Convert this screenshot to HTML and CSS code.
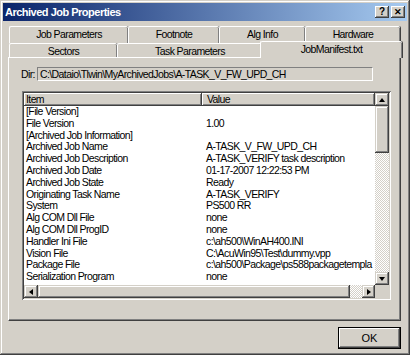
FILE: index.html
```html
<!DOCTYPE html>
<html lang="en">
<head>
    <meta charset="UTF-8">
    <title>Archived Job Properties</title>
    <link rel="stylesheet" href="styles.css">
</head>
<body>
    <div class="window">
        <div class="titlebar">
            <span class="title">Archived Job Properties</span>
            <div class="caption-btns">
                <span class="cbtn">?</span>
                <span class="cbtn cbtn-x">&#x2715;</span>
            </div>
        </div>

        <div class="tabrow back">
            <div class="tab" style="width:119px">Job Parameters</div>
            <div class="tab" style="width:91px">Footnote</div>
            <div class="tab" style="width:86px">Alg Info</div>
            <div class="tab" style="width:95px">Hardware</div>
        </div>
        <div class="tabrow front">
            <div class="tab" style="width:108px">Sectors</div>
            <div class="tab" style="width:145px">Task Parameters</div>
            <div class="tab selected" style="width:142px">JobManifest.txt</div>
        </div>

        <div class="panel">
            <div class="dir-row">
                <span class="dir-label">Dir:</span>
                <div class="field">C:\Dataio\Tlwin\MyArchivedJobs\A-TASK_V_FW_UPD_CH</div>
            </div>

            <div class="listview">
                <div class="list-main">
                    <div class="list-header">
                        <div class="hcol hcol-item">Item</div>
                        <div class="hcol hcol-value">Value</div>
                    </div>
                    <div class="rows">
                        <div class="row"><span>[File Version]</span><span></span></div>
                        <div class="row"><span>File Version</span><span>1.00</span></div>
                        <div class="row"><span>[Archived Job Information]</span><span></span></div>
                        <div class="row"><span>Archived Job Name</span><span>A-TASK_V_FW_UPD_CH</span></div>
                        <div class="row"><span>Archived Job Description</span><span>A-TASK_VERIFY task description</span></div>
                        <div class="row"><span>Archived Job Date</span><span>01-17-2007 12:22:53 PM</span></div>
                        <div class="row"><span>Archived Job State</span><span>Ready</span></div>
                        <div class="row"><span>Originating Task Name</span><span>A-TASK_VERIFY</span></div>
                        <div class="row"><span>System</span><span>PS500 RR</span></div>
                        <div class="row"><span>Alg COM Dll File</span><span>none</span></div>
                        <div class="row"><span>Alg COM Dll ProgID</span><span>none</span></div>
                        <div class="row"><span>Handler Ini File</span><span>c:\ah500\WinAH400.INI</span></div>
                        <div class="row"><span>Vision File</span><span>C:\AcuWin95\Test\dummy.vpp</span></div>
                        <div class="row"><span>Package File</span><span>c:\ah500\Package\ps588packagetempla</span></div>
                        <div class="row"><span>Serialization Program</span><span>none</span></div>
                    </div>
                </div>
                <div class="vscroll">
                    <div class="sbtn"><i class="arrow up"></i></div>
                    <div class="vthumb"></div>
                    <div class="track"></div>
                    <div class="sbtn"><i class="arrow down"></i></div>
                </div>
                <div class="hscroll">
                    <div class="sbtn"><i class="arrow left"></i></div>
                    <div class="hthumb"></div>
                    <div class="track"></div>
                    <div class="sbtn"><i class="arrow right"></i></div>
                </div>
                <div class="corner"></div>
            </div>
        </div>

        <div class="footer">
            <button class="ok">OK</button>
        </div>
    </div>
</body>
</html>
```

FILE: styles.css
```css
body {
    margin: 0;
    font-family: "Liberation Sans", Arial, sans-serif;
    font-size: 10.5px;
    letter-spacing: -0.6px;
    color: #000;
    background: #d4d0c8;
}
.window {
    width: 410px;
    height: 355px;
    box-sizing: border-box;
    padding: 3px;
    background: #d4d0c8;
    box-shadow: inset -1px -1px #404040, inset 1px 1px #d4d0c8, inset -2px -2px #808080, inset 2px 2px #fff;
    display: flex;
    flex-direction: column;
}
.titlebar {
    height: 18px;
    background: linear-gradient(to right, #0a246a, #a6caf0);
    display: flex;
    align-items: center;
    justify-content: space-between;
    padding: 0 2px 0 2px;
}
.title {
    font-weight: bold;
    font-size: 11px;
    letter-spacing: -0.5px;
    color: #fff;
}
.caption-btns {
    display: flex;
    gap: 2px;
}
.cbtn {
    width: 14px;
    height: 12px;
    box-sizing: border-box;
    background: #d4d0c8;
    box-shadow: inset -1px -1px #404040, inset 1px 1px #fff, inset -2px -2px #808080;
    font-weight: bold;
    font-size: 10px;
    letter-spacing: 0;
    line-height: 12px;
    text-align: center;
}
.cbtn-x {
    font-size: 9px;
}

/* tabs */
.tabrow {
    display: flex;
    margin-left: 6px;
}
.tabrow.back {
    margin-top: 5px;
    height: 17px;
}
.tabrow.front {
    height: 14px;
    position: relative;
    z-index: 2;
}
.tab {
    box-sizing: border-box;
    text-align: center;
    border-top: 1px solid #fff;
    border-left: 1px solid #fff;
    border-top-left-radius: 2px;
    border-top-right-radius: 2px;
    box-shadow: inset -1px 0 #808080, 1px 0 #404040;
}
.back .tab {
    line-height: 15px;
}
.front .tab {
    line-height: 14px;
    height: 14px;
}
.front .tab.selected {
    margin-top: -2px;
    margin-left: -2px;
    height: 17px;
    background: #d4d0c8;
    line-height: 14px;
}

.panel {
    height: 264px;
    margin: 0 6px 0 5px;
    box-sizing: border-box;
    border-top: 1px solid #fff;
    border-left: 1px solid #fff;
    border-right: 1px solid #404040;
    border-bottom: 1px solid #404040;
    box-shadow: inset -1px -1px #808080;
    padding: 9px 12px 0 12px;
}
.dir-row {
    display: flex;
    align-items: center;
    gap: 3px;
}
.dir-label {
    width: 13px;
}
.field {
    width: 336px;
    height: 14px;
    box-sizing: border-box;
    border-top: 1px solid #808080;
    border-left: 1px solid #808080;
    border-right: 1px solid #fff;
    border-bottom: 1px solid #fff;
    padding-left: 2px;
    line-height: 12px;
    white-space: nowrap;
    overflow: hidden;
}

/* list view */
.listview {
    margin-top: 10px;
    margin-left: 1px;
    width: 369px;
    height: 209px;
    box-sizing: border-box;
    padding: 2px;
    background: #fff;
    box-shadow: inset 1px 1px #808080, inset -1px -1px #fff, inset 2px 2px #404040, inset -2px -2px #d4d0c8;
    display: grid;
    grid-template-columns: 351px 14px;
    grid-template-rows: 192px 13px;
}
.list-main {
    overflow: hidden;
}
.list-header {
    display: flex;
    height: 13px;
}
.hcol {
    box-sizing: border-box;
    background: #d4d0c8;
    box-shadow: inset -1px -1px #404040, inset 1px 1px #fff, inset -2px -2px #808080;
    line-height: 13px;
    padding-left: 2px;
}
.hcol-item {
    width: 178px;
}
.hcol-value {
    flex: 1;
    padding-left: 5px;
}
.row {
    display: flex;
    height: 11.8px;
    line-height: 11.8px;
    white-space: nowrap;
}
.row span {
    flex-shrink: 0;
}
.row span:first-child {
    width: 178px;
    padding-left: 2px;
    box-sizing: border-box;
}
.row span:last-child {
    padding-left: 4px;
}

.sbtn {
    background: #d4d0c8;
    box-shadow: inset -1px -1px #404040, inset 1px 1px #d4d0c8, inset -2px -2px #808080, inset 2px 2px #fff;
    display: flex;
    align-items: center;
    justify-content: center;
}
.track {
    background: repeating-conic-gradient(#fff 0 25%, #d4d0c8 0 50%) 0 0 / 2px 2px;
}
.vscroll {
    display: grid;
    grid-template-rows: 13px 47px 1fr 13px;
}
.vthumb, .hthumb {
    background: #d4d0c8;
    box-shadow: inset -1px -1px #404040, inset 1px 1px #d4d0c8, inset -2px -2px #808080, inset 2px 2px #fff;
}
.hscroll {
    display: grid;
    grid-template-columns: 14px 312px 1fr 13px;
}
.corner {
    background: #d4d0c8;
}
.arrow {
    width: 0;
    height: 0;
    border: 3px solid transparent;
}
.arrow.up {
    border-top: 0;
    border-bottom: 4px solid #000;
}
.arrow.down {
    border-bottom: 0;
    border-top: 4px solid #000;
}
.arrow.left {
    border-left: 0;
    border-right: 4px solid #000;
}
.arrow.right {
    border-right: 0;
    border-left: 4px solid #000;
}

.footer {
    display: flex;
    justify-content: flex-end;
    padding: 6px 6px 0 0;
}
.ok {
    width: 63px;
    height: 22px;
    font-family: inherit;
    font-size: 11px;
    background: #d4d0c8;
    border: 1px solid #000;
    box-shadow: inset -1px -1px #404040, inset 1px 1px #fff, inset -2px -2px #808080;
    padding: 0;
}
```
